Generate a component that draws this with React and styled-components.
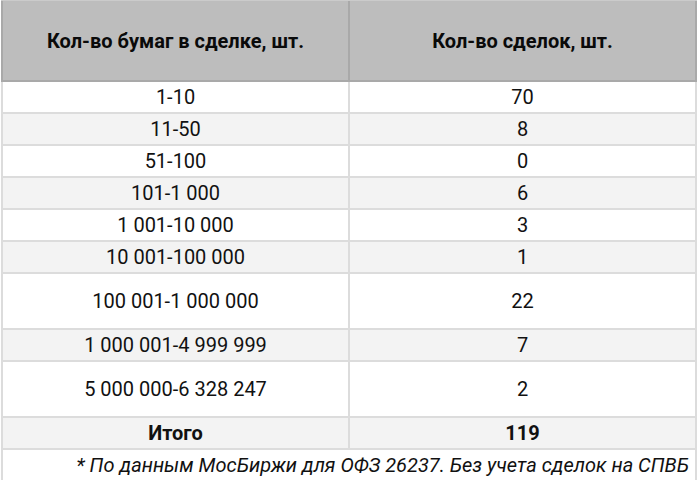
import styled, { createGlobalStyle } from "styled-components";

const GlobalStyle = createGlobalStyle`
    body {
        margin: 0;
        background: #ffffff;
        font-family: Roboto, "Liberation Sans", Arial, sans-serif;
        color: #111111;
    }
`;

const rows = [
    { range: "1-10", count: "70" },
    { range: "11-50", count: "8" },
    { range: "51-100", count: "0" },
    { range: "101-1 000", count: "6" },
    { range: "1 001-10 000", count: "3" },
    { range: "10 001-100 000", count: "1" },
    { range: "100 001-1 000 000", count: "22", tall: true },
    { range: "1 000 001-4 999 999", count: "7" },
    { range: "5 000 000-6 328 247", count: "2", tall: true },
];

const App = () => {
    return (
        <>
            <GlobalStyle />
            <Table>
                <HeadRow>
                    <HeadCell>Кол-во бумаг в сделке, шт.</HeadCell>
                    <HeadCell>Кол-во сделок, шт.</HeadCell>
                </HeadRow>
                {rows.map((row, i) => (
                    <Row key={row.range} $striped={i % 2 === 1} $tall={row.tall}>
                        <Cell>{row.range}</Cell>
                        <Cell>{row.count}</Cell>
                    </Row>
                ))}
                <Row $striped>
                    <Cell $bold>Итого</Cell>
                    <Cell $bold>119</Cell>
                </Row>
                <Note>* По данным МосБиржи для ОФЗ 26237. Без учета сделок на СПВБ</Note>
            </Table>
        </>
    );
};
export default App;

const Table = styled.div`
    width: 696px;
    margin-left: 1px;
    display: flex;
    flex-direction: column;
`;

const HeadRow = styled.div`
    display: grid;
    grid-template-columns: 349px 347px;
    height: 82px;
    box-sizing: border-box;
    border-top: 1px solid #cbcbcb;
    border-bottom: 2px solid #a9a9a9;
    background: #bdbdbd;
`;

const HeadCell = styled.div`
    display: flex;
    align-items: center;
    justify-content: center;
    border-right: 2px solid #a9a9a9;
    font-weight: 700;
    font-size: 20px;
    color: #0a0a0a;
    &:first-child {
        border-left: 2px solid #a9a9a9;
    }
`;

const Row = styled.div`
    display: grid;
    grid-template-columns: 349px 347px;
    height: ${p => (p.$tall ? 56 : 32)}px;
    box-sizing: border-box;
    border-bottom: 2px solid #dcdcdc;
    background: ${p => (p.$striped ? "#f3f3f3" : "#ffffff")};
`;

const Cell = styled.div`
    display: flex;
    align-items: center;
    justify-content: center;
    border-right: 2px solid #dcdcdc;
    font-size: 20px;
    font-weight: ${p => (p.$bold ? 700 : 400)};
    &:first-child {
        border-left: 2px solid #dcdcdc;
    }
`;

const Note = styled.div`
    height: 30px;
    display: flex;
    align-items: center;
    justify-content: flex-end;
    padding-right: 6px;
    border-left: 2px solid #dcdcdc;
    border-right: 2px solid #dcdcdc;
    font-style: italic;
    font-size: 20px;
`;
